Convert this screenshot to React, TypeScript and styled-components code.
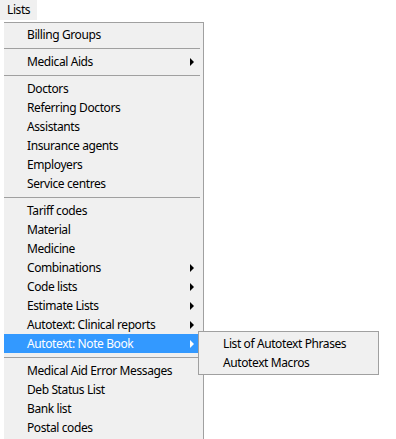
import React from 'react';
import styled, { createGlobalStyle } from 'styled-components';

const GlobalStyle = createGlobalStyle`
  html, body {
    margin: 0;
    padding: 0;
    background: #ffffff;
  }
  body {
    font-family: "Noto Sans", "Liberation Sans", sans-serif;
    font-size: 12px;
    letter-spacing: -0.4px;
    color: #000000;
    overflow: hidden;
  }
`;

const Page = styled.div`
  width: 396px;
  height: 439px;
  background: #ffffff;
`;

const MenuBar = styled.div`
  display: flex;
  height: 20px;
`;

const MenuBarItem = styled.div`
  background: #f0f0f0;
  padding: 0 7px 0 7px;
  height: 20px;
  line-height: 19px;
`;

const Dropdown = styled.div`
  margin: 2px 0 0 4px;
  width: 199px;
  background: #f0f0f0;
  border-top: 1px solid #a0a0a0;
  border-right: 1px solid #a0a0a0;
  padding: 2px 0 3px;
`;

const Item = styled.div<{ $active?: boolean }>`
  position: relative;
  display: flex;
  align-items: center;
  width: 194px;
  height: 19px;
  box-sizing: border-box;
  padding: 0 4px 0 23px;
  background: ${p => (p.$active ? '#3399ff' : 'transparent')};
  color: ${p => (p.$active ? '#ffffff' : '#000000')};
  white-space: nowrap;
`;

const Arrow = styled.span<{ $active?: boolean }>`
  margin-left: auto;
  width: 0;
  height: 0;
  border-top: 4px solid transparent;
  border-bottom: 4px solid transparent;
  border-left: 4px solid ${p => (p.$active ? '#ffffff' : '#000000')};
`;

const Separator = styled.div`
  height: 8px;
  display: flex;
  align-items: center;

  &::after {
    content: '';
    width: 196px;
    height: 1px;
    background: #a0a0a0;
  }
`;

const SubMenu = styled.div`
  position: absolute;
  left: 194px;
  top: -3px;
  width: 179px;
  background: #f0f0f0;
  border: 1px solid #a0a0a0;
  padding: 2px 0;
  z-index: 2;
`;

const SubItem = styled.div`
  height: 19px;
  line-height: 19px;
  padding-left: 24px;
  color: #000000;
  white-space: nowrap;
`;

type Entry = { label?: string; sub?: boolean; active?: boolean; sep?: boolean };

const entries: Entry[] = [
  { label: 'Billing Groups' },
  { sep: true },
  { label: 'Medical Aids', sub: true },
  { sep: true },
  { label: 'Doctors' },
  { label: 'Referring Doctors' },
  { label: 'Assistants' },
  { label: 'Insurance agents' },
  { label: 'Employers' },
  { label: 'Service centres' },
  { sep: true },
  { label: 'Tariff codes' },
  { label: 'Material' },
  { label: 'Medicine' },
  { label: 'Combinations', sub: true },
  { label: 'Code lists', sub: true },
  { label: 'Estimate Lists', sub: true },
  { label: 'Autotext: Clinical reports', sub: true },
  { label: 'Autotext: Note Book', sub: true, active: true },
  { sep: true },
  { label: 'Medical Aid Error Messages' },
  { label: 'Deb Status List' },
  { label: 'Bank list' },
  { label: 'Postal codes' },
];

export default function App() {
  return (
    <Page>
      <GlobalStyle />
      <MenuBar>
        <MenuBarItem>Lists</MenuBarItem>
      </MenuBar>
      <Dropdown>
        {entries.map((e, i) =>
          e.sep ? (
            <Separator key={i} />
          ) : (
            <Item key={i} $active={e.active}>
              <span>{e.label}</span>
              {e.sub && <Arrow $active={e.active} />}
              {e.active && (
                <SubMenu>
                  <SubItem>List of Autotext Phrases</SubItem>
                  <SubItem>Autotext Macros</SubItem>
                </SubMenu>
              )}
            </Item>
          )
        )}
      </Dropdown>
    </Page>
  );
}
